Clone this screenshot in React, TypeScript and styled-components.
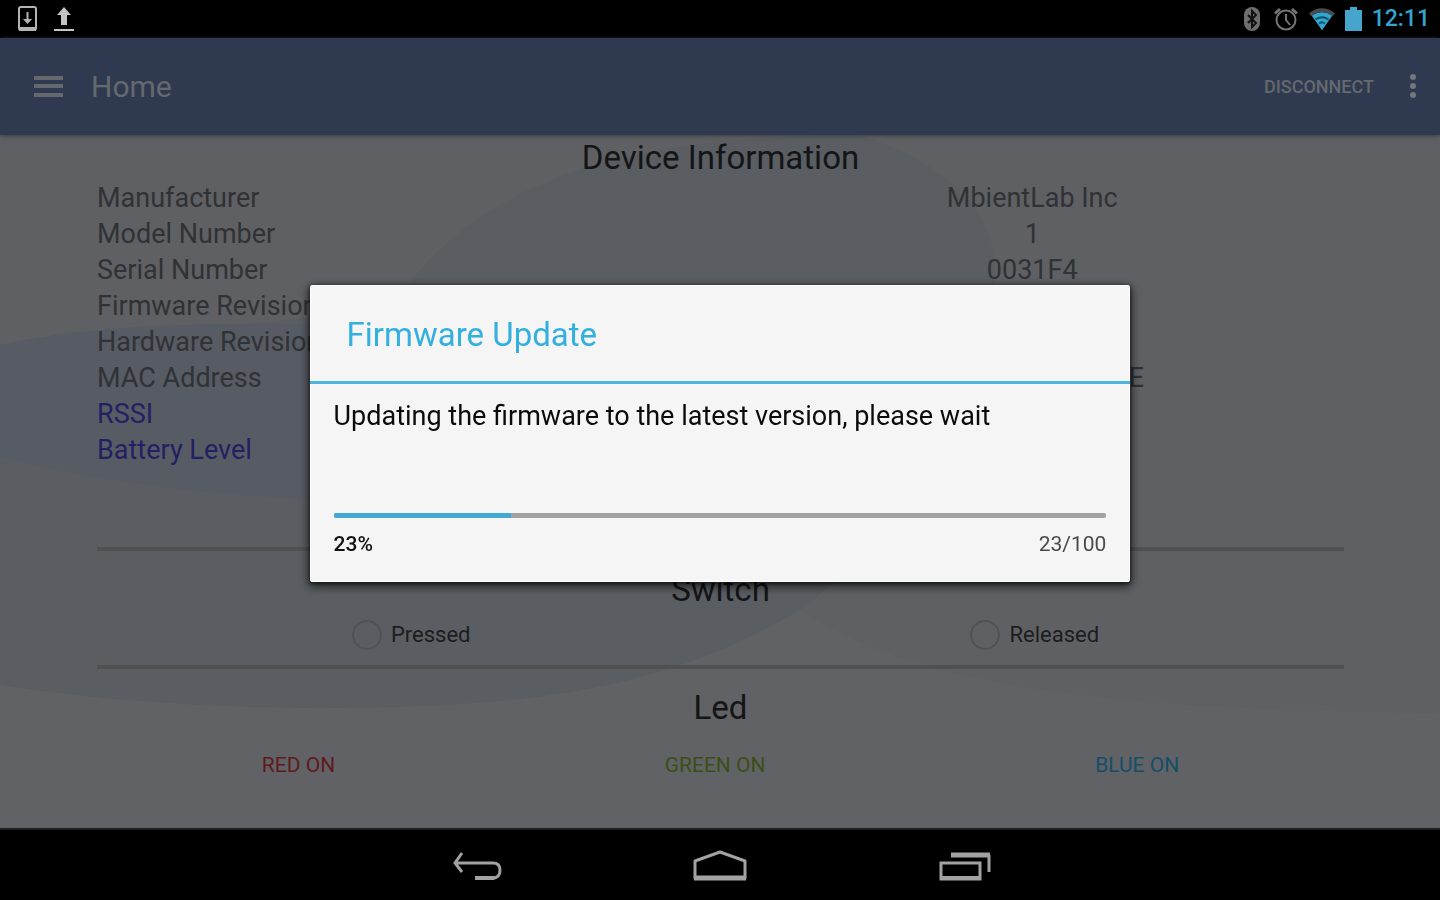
import React from "react";
import styled, { createGlobalStyle } from "styled-components";

const GlobalStyle = createGlobalStyle`
  *, *::before, *::after { box-sizing: border-box; }
  html, body, #root { height: 100%; }
  body {
    margin: 0;
    background: #000;
    font-family: Roboto, "Liberation Sans", sans-serif;
    color: #131517;
  }
  button { font: inherit; color: inherit; background: none; border: 0; padding: 0; cursor: pointer; }
  svg { display: block; flex: none; }
`;

const Screen = styled.div`
  min-height: 100%;
  display: flex;
  flex-direction: column;
`;

const StatusBar = styled.header`
  height: 38px;
  display: flex;
  align-items: center;
  justify-content: space-between;
  padding: 0 10px 0 16px;
  background: #000;
`;

const StatusGroup = styled.div<{ $gap: number }>`
  display: flex;
  align-items: center;
  gap: ${(p) => p.$gap}px;
`;

const Clock = styled.time`
  font-size: 23px;
  line-height: 28px;
  font-weight: 500;
  color: #33a5cf;
`;

const Toolbar = styled.div`
  position: relative;
  z-index: 1;
  height: 97px;
  display: flex;
  align-items: center;
  padding: 0 20px 0 34px;
  background: #2f3a51;
  color: #65696e;
  box-shadow: 0 1px 4px #3c3e42;
`;

const ToolbarTitle = styled.h1`
  flex: 1;
  margin: 0 0 0 28px;
  font-size: 30px;
  line-height: 36px;
  font-weight: 400;
`;

const ToolbarAction = styled.button`
  && {
    margin-right: 32px;
    font-size: 18px;
    line-height: 24px;
    font-weight: 500;
  }
`;

const Content = styled.main`
  position: relative;
  flex: 1;
  display: flex;
  flex-direction: column;
  padding: 1px 96px 0 97px;
  background: #5f6063;
`;

const Backdrop = styled.svg`
  position: absolute;
  inset: 0;
  width: 100%;
  height: 100%;
`;

const Section = styled.section<{ $tall?: boolean }>`
  position: relative;
  display: flex;
  flex-direction: column;
  ${(p) => (p.$tall ? "min-height: 411px;" : "")}
  & + & { border-top: 4px solid #4e5052; padding-top: 17px; }
`;

const SectionTitle = styled.h2`
  margin: 0;
  font-size: 33px;
  line-height: 44px;
  font-weight: 400;
  text-align: center;
`;

const InfoTable = styled.table`
  width: 100%;
  table-layout: fixed;
  border-collapse: collapse;
  font-size: 27px;
  line-height: 36px;
  color: #303235;
  th, td { padding: 0; font-weight: 400; height: 36px; }
  th { text-align: left; }
  td { text-align: center; }
`;

const InfoLink = styled.a`
  color: #241f63;
  text-decoration: none;
`;

const SwitchRow = styled.div`
  display: flex;
  height: 53px;
  padding-bottom: 7px;
`;

const SwitchOption = styled.label`
  flex: 1 1 0;
  display: flex;
  align-items: center;
  justify-content: center;
  gap: 9px;
  padding-left: 5px;
  font-size: 22px;
  line-height: 28px;
  color: #1b1d20;
`;

const Radio = styled.input`
  appearance: none;
  width: 30px;
  height: 30px;
  margin: 0;
  border: 2px solid #505356;
  border-radius: 50%;
`;

const LedRow = styled.div`
  display: flex;
  margin-top: 17px;
`;

const LedButton = styled.button<{ $color: string }>`
  && {
    flex: 1 1 auto;
    font-size: 21px;
    line-height: 36px;
    color: ${(p) => p.$color};
  }
`;

const NavBar = styled.nav`
  height: 72px;
  display: flex;
  justify-content: center;
  align-items: center;
  gap: 190px;
  background: #000;
  border-top: 2px solid #1d1f20;
`;

const Overlay = styled.div`
  position: fixed;
  inset: 0;
  z-index: 2;
  display: flex;
  align-items: center;
  justify-content: center;
  padding-bottom: 34px;
`;

const Dialog = styled.div`
  width: 57%;
  background: #f5f5f5;
  border-radius: 3px;
  box-shadow: inset 0 0 0 1px #fdfdfd, 0 3px 8px 2px rgba(0, 0, 0, 0.6), 0 1px 3px 1px rgba(0, 0, 0, 0.4);
`;

const DialogTitle = styled.h2`
  margin: 0;
  padding: 28px 37px 24px;
  font-size: 33px;
  line-height: 44px;
  font-weight: 400;
  color: #33b0df;
  border-bottom: 3px solid #4cb5e1;
`;

const DialogBody = styled.div`
  display: flex;
  flex-direction: column;
  padding: 14px 24px 24px;
`;

const Message = styled.p`
  margin: 0 0 79px;
  font-size: 27px;
  line-height: 36px;
  color: #0b0b0b;
`;

const Progress = styled.progress`
  appearance: none;
  display: block;
  width: 100%;
  height: 5px;
  border: 0;
  border-radius: 2px;
  overflow: hidden;
  background: #a2a2a2;
  &::-webkit-progress-bar { background: #a2a2a2; }
  &::-webkit-progress-value { background: #41a9d2; }
`;

const ProgressLegend = styled.div`
  display: flex;
  justify-content: space-between;
  margin-top: 12px;
  font-size: 21px;
  line-height: 28px;
  color: #4a4a4a;
`;

const Percent = styled.strong`
  font-weight: 500;
  color: #111;
`;

const deviceInfo: { label: string; value?: string; link?: boolean }[] = [
  { label: "Manufacturer", value: "MbientLab Inc" },
  { label: "Model Number", value: "1" },
  { label: "Serial Number", value: "0031F4" },
  { label: "Firmware Revision" },
  { label: "Hardware Revision" },
  { label: "MAC Address", value: "D5:7B:A8:F6:3C:6E" },
  { label: "RSSI", link: true },
  { label: "Battery Level", link: true },
];

const leds = [
  { label: "RED ON", color: "#5f1a1e" },
  { label: "GREEN ON", color: "#3a4f16" },
  { label: "BLUE ON", color: "#154e69" },
];

const DownloadIcon = () => (
  <svg width="22" height="28" viewBox="0 0 22 28" fill="none" stroke="#b4b4b4">
    <rect x="3" y="2" width="17" height="23" rx="2" strokeWidth="2" />
    <path d="M3 24h17" strokeWidth="4" />
    <path d="M11.500 7v9" strokeWidth="2" />
    <path d="M7 14h9l-4.500 5z" fill="#b4b4b4" stroke="none" />
  </svg>
);

const UploadIcon = () => (
  <svg width="22" height="28" viewBox="0 0 22 28" fill="#c4c4c4">
    <path d="M11 2l7 8h-4v10H8V10H4zM1 24h20v2H1z" />
  </svg>
);

const BluetoothIcon = () => (
  <svg width="20" height="26" viewBox="0 0 20 26" fill="none">
    <rect x="1" y="1" width="16" height="24" rx="8" fill="#6e6e6e" />
    <path d="M5 9l8 8-4 4V5l4 4-8 8" stroke="#111" strokeWidth="2" />
  </svg>
);

const AlarmIcon = () => (
  <svg width="26" height="26" viewBox="0 0 26 26" fill="none" stroke="#757575" strokeWidth="2">
    <circle cx="13" cy="14" r="9.500" />
    <path d="M13 8v6l4 5" />
    <path d="M2 7.500L7 3M24 7.500L19 3" strokeWidth="3" />
  </svg>
);

const WifiIcon = () => (
  <svg width="26" height="26" viewBox="0 0 28 26">
    <path d="M0 7C8-.5 20-.5 28 7l-2.500 3C18 4 10 4 2.500 10z" fill="#4b4b4b" />
    <path d="M3 9.500c7-5 15-5 22 0L14 25z" fill="#33a5cf" />
    <path d="M7 13.500c5-3.500 9-3.500 14 0M11 18c2-2 4-2 6 0" fill="none" stroke="#0c5068" strokeWidth="2" />
  </svg>
);

const BatteryIcon = () => (
  <svg width="17" height="26" viewBox="0 0 17 26" fill="#45a5cc">
    <path d="M5 1h7v3h5v21H0V4h5z" />
  </svg>
);

const MenuIcon = () => (
  <svg width="29" height="24" viewBox="0 0 29 24" fill="#65696e">
    <path d="M0 1h29v4H0zM0 9h29v4H0zM0 18h29v4H0z" />
  </svg>
);

const MoreIcon = () => (
  <svg width="14" height="28" viewBox="0 0 14 28" fill="#73767a">
    <circle cx="7" cy="4" r="3" />
    <circle cx="7" cy="13" r="3" />
    <circle cx="7" cy="22" r="3" />
  </svg>
);

const BackIcon = () => (
  <svg width="54" height="34" viewBox="0 0 54 34" fill="none" stroke="#a2a2a2">
    <path d="M13 5L6 15l7 9M6 15h38c5 0 7 3 7 7s-2 8-7 8" strokeWidth="3" />
    <path d="M26 30h19" strokeWidth="4" />
  </svg>
);

const HomeIcon = () => (
  <svg width="54" height="34" viewBox="0 0 54 34" fill="none" stroke="#a2a2a2">
    <path d="M2 31V13L27 4l25 9v18" strokeWidth="3" strokeLinejoin="round" />
    <path d="M1 30h52" strokeWidth="5" />
  </svg>
);

const RecentIcon = () => (
  <svg width="54" height="34" viewBox="0 0 54 34" fill="none" stroke="#a2a2a2">
    <path d="M14 7h39" strokeWidth="5" />
    <path d="M52 7v17" strokeWidth="3" />
    <path d="M4 15h39v16H4z" strokeWidth="3" />
    <path d="M3 30h41" strokeWidth="4" />
  </svg>
);

export default function App() {
  return (
    <>
      <GlobalStyle />
      <Screen>
        <StatusBar>
          <StatusGroup $gap={15}>
            <DownloadIcon />
            <UploadIcon />
          </StatusGroup>
          <StatusGroup $gap={10}>
            <BluetoothIcon />
            <AlarmIcon />
            <WifiIcon />
            <BatteryIcon />
            <Clock>12:11</Clock>
          </StatusGroup>
        </StatusBar>

        <Toolbar>
          <button type="button" aria-label="Open menu">
            <MenuIcon />
          </button>
          <ToolbarTitle>Home</ToolbarTitle>
          <ToolbarAction type="button">DISCONNECT</ToolbarAction>
          <button type="button" aria-label="More options">
            <MoreIcon />
          </button>
        </Toolbar>

        <Content>
          <Backdrop viewBox="0 0 1440 693" preserveAspectRatio="none" aria-hidden="true">
            <path
              d="M0 210C150 185 300 200 400 160C460 80 560 0 860 0C960 35 995 80 995 140C990 290 900 400 800 475C680 545 560 573 330 573C200 573 90 564 0 550Z"
              fill="#5a5d61"
            />
            <path d="M0 210C90 190 200 187 330 190V365C200 360 90 345 0 322Z" fill="#575b63" />
            <path
              d="M800 475C900 540 1050 575 1440 578V693H0V550C90 564 200 573 330 573C560 573 680 545 800 475Z"
              fill="#616265"
            />
          </Backdrop>

          <Section $tall>
            <SectionTitle>Device Information</SectionTitle>
            <InfoTable>
              <tbody>
                {deviceInfo.map((row) => (
                  <tr key={row.label}>
                    <th scope="row">
                      {row.link ? <InfoLink href="#">{row.label}</InfoLink> : row.label}
                    </th>
                    <td>{row.value}</td>
                  </tr>
                ))}
              </tbody>
            </InfoTable>
          </Section>

          <Section>
            <SectionTitle>Switch</SectionTitle>
            <SwitchRow>
              {["Pressed", "Released"].map((name) => (
                <SwitchOption key={name}>
                  <Radio type="radio" name="switch" />
                  {name}
                </SwitchOption>
              ))}
            </SwitchRow>
          </Section>

          <Section>
            <SectionTitle>Led</SectionTitle>
            <LedRow>
              {leds.map((led) => (
                <LedButton key={led.label} type="button" $color={led.color}>
                  {led.label}
                </LedButton>
              ))}
            </LedRow>
          </Section>
        </Content>

        <NavBar>
          <button type="button" aria-label="Back">
            <BackIcon />
          </button>
          <button type="button" aria-label="Home">
            <HomeIcon />
          </button>
          <button type="button" aria-label="Recent apps">
            <RecentIcon />
          </button>
        </NavBar>
      </Screen>

      <Overlay>
        <Dialog role="dialog" aria-modal="true" aria-labelledby="update-title">
          <DialogTitle id="update-title">Firmware Update</DialogTitle>
          <DialogBody>
            <Message>Updating the firmware to the latest version, please wait</Message>
            <Progress value={23} max={100} aria-label="Firmware update progress" />
            <ProgressLegend>
              <Percent>23%</Percent>
              <span>23/100</span>
            </ProgressLegend>
          </DialogBody>
        </Dialog>
      </Overlay>
    </>
  );
}
